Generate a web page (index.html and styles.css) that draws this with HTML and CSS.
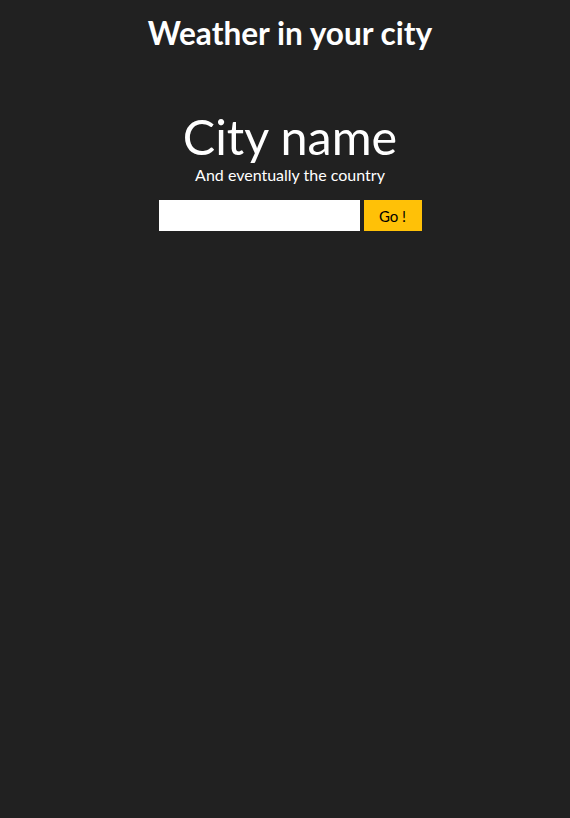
FILE: index.html
```html
<!DOCTYPE html>
<html>
<head>
<meta charset="utf-8">
<link rel="stylesheet" href="styles.css">
</head>
<body>
<header class="header"><h1 class="title">Weather in your city</h1></header>
<main class="main">
  <h2 class="city">City name</h2>
  <p class="country">And eventually the country</p>
  <form class="search">
    <input class="search-input" type="text">
    <button class="search-btn" type="button">Go !</button>
  </form>
</main>
</body>
</html>
```
FILE: styles.css
```css
html, body { margin: 0; padding: 0; }
body {
  background: #212121;
  color: #fff;
  font-family: Lato, "Noto Sans", sans-serif;
  height: 818px;
  padding-left: 10px;
  box-sizing: border-box;
}
.header { display: flex; justify-content: center; padding-top: 13px; }
.title { margin: 0; font-size: 31.6px; font-weight: 700; line-height: 40px; }
.main { display: flex; flex-direction: column; align-items: center; padding-top: 55px; }
.city { margin: 0; font-size: 48.5px; font-weight: 400; line-height: 57px; }
.country { margin: 0; font-size: 16px; line-height: 19px; }
.search { display: flex; gap: 4px; margin-top: 16px; }
.search-input { width: 201px; height: 31px; box-sizing: border-box; border: none; margin: 0; padding: 0 6px; background: #fff; }
.search-btn { width: 58px; height: 31px; border: none; background: #ffc107; color: #000; font-family: Lato, sans-serif; font-size: 15px; padding: 0; }
```
